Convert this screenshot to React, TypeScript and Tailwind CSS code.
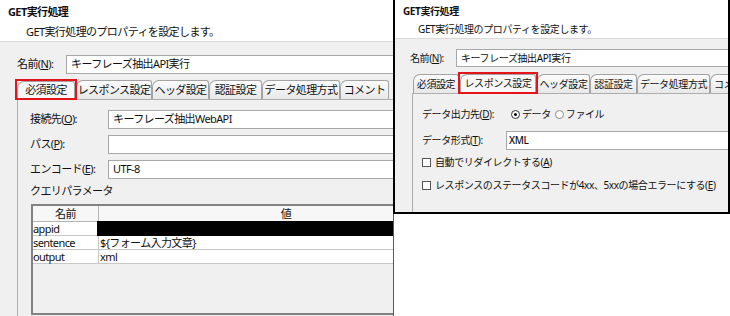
const U = ({ c }: { c: string }) => <span className="underline underline-offset-1">{c}</span>;

const tabBase =
  "shrink-0 flex items-center justify-center border border-b-0 border-[#a3a3a3] rounded-tl-[7px] rounded-tr-[3px] whitespace-nowrap overflow-hidden";
const tabOff = tabBase + " h-[19px] bg-gradient-to-b from-[#fbfbfb] to-[#e8e8e8]";
const tabOn = tabBase + " w-full h-full bg-[#f7f7f7]";
const redBox = "relative z-10 shrink-0 mb-[1px] outline-2 outline-[#e5141b]";

function Radio({ on }: { on?: boolean }) {
  return (
    <span
      className={
        "w-[9px] h-[9px] rounded-full border bg-white flex items-center justify-center shrink-0 " +
        (on ? "border-[#333]" : "border-[#8a8a8a]")
      }
    >
      {on && <span className="w-[3px] h-[3px] rounded-full bg-black" />}
    </span>
  );
}

function Check() {
  return <span className="w-[9px] h-[9px] border border-[#555] bg-white shrink-0" />;
}

export function LeftDialog() {
  return (
    <div className="w-[394px] h-[316px] shrink-0 overflow-hidden border-r border-[#5a5a5a] text-[11px] tracking-[-0.6px]">
      <div className="w-[520px]">
        <div className="bg-white h-[42px] border-b border-[#d9d9d9]">
          <div className="pl-[8px] pt-[4px] leading-[16px] font-bold">GET実行処理</div>
          <div className="pl-[26px] mt-[4px] leading-[16px]">GET実行処理のプロパティを設定します。</div>
        </div>
        <div className="bg-[#f0f0f0] h-[274px] pt-[13px]">
          <div className="flex items-center pl-[17px] h-[19px]">
            <div className="w-[49px]">
              名前(<U c="N" />):
            </div>
            <div className="flex-1 h-[19px] bg-white border border-[#a8a8a8] flex items-center pl-[4px]">
              キーフレーズ抽出API実行
            </div>
          </div>
          <div className="flex items-end h-[20px] mt-[5px] pl-[17px]">
            <div className={redBox + " w-[58px] h-[17px]"}>
              <div className={tabOn}>必須設定</div>
            </div>
            <div className={tabOff + " w-[76px] ml-px"}>レスポンス設定</div>
            <div className={tabOff + " w-[57px]"}>ヘッダ設定</div>
            <div className={tabOff + " w-[53px]"}>認証設定</div>
            <div className={tabOff + " w-[78px]"}>データ処理方式</div>
            <div className={tabOff + " w-[49px]"}>コメント</div>
          </div>
          <div className="ml-[17px] h-[217px] border-t border-l border-[#aeaeae] pl-[12px] pt-[10px]">
            <div className="flex flex-col gap-[6px]">
              <div className="flex items-center h-[19px]">
                <div className="w-[78px]">
                  接続先(<U c="O" />):
                </div>
                <div className="flex-1 h-[19px] bg-white border border-[#a8a8a8] flex items-center pl-[4px]">
                  キーフレーズ抽出WebAPI
                </div>
              </div>
              <div className="flex items-center h-[19px]">
                <div className="w-[78px]">
                  パス(<U c="P" />):
                </div>
                <div className="flex-1 h-[19px] bg-white border border-[#a8a8a8]" />
              </div>
              <div className="flex items-center h-[19px]">
                <div className="w-[78px]">
                  エンコード(<U c="E" />):
                </div>
                <div className="flex-1 h-[19px] bg-white border border-[#a8a8a8] flex items-center pl-[4px]">
                  UTF-8
                </div>
              </div>
            </div>
            <div className="mt-[4px] leading-[16px]">クエリパラメータ</div>
            <div className="mt-[5px] ml-px w-[444px] h-[111px] border-2 border-[#828282] bg-[#f0f0f0]">
              <div className="flex h-[16px] border-b border-[#b5b5b5] bg-[#f7f7f7]">
                <div className="w-[66px] border-r border-[#b5b5b5] text-center leading-[15px]">名前</div>
                <div className="flex-1 text-center leading-[15px]">値</div>
              </div>
              {[
                ["appid", ""],
                ["sentence", "${フォーム入力文章}"],
                ["output", "xml"],
              ].map(([k, v]) => (
                <div key={k} className="flex h-[14px] border-b border-[#c8c8c8] bg-white leading-[13px]">
                  <div className="w-[66px] border-r border-[#c8c8c8]">{k}</div>
                  <div className="relative flex-1 pl-[1px]">
                    {v}
                    {k === "appid" && <div className="absolute -left-[2px] -top-px -bottom-px right-0 bg-black" />}
                  </div>
                </div>
              ))}
            </div>
          </div>
        </div>
      </div>
    </div>
  );
}

export function RightDialog() {
  return (
    <div className="relative z-10 -ml-px w-[337px] h-[214px] shrink-0 overflow-hidden border-l-2 border-r-2 border-b-2 border-black text-[10px] tracking-[-0.4px]">
      <div className="w-[420px]">
        <div className="bg-white h-[39px] border-b border-[#d9d9d9]">
          <div className="pl-[8px] pt-[3px] leading-[16px] font-bold">GET実行処理</div>
          <div className="pl-[23px] mt-[2px] leading-[16px]">GET実行処理のプロパティを設定します。</div>
        </div>
        <div className="bg-[#f0f0f0] h-[173px] pt-[10px]">
          <div className="flex items-center pl-[15px] h-[18px]">
            <div className="w-[46px]">
              名前(<U c="N" />):
            </div>
            <div className="flex-1 h-[18px] bg-white border border-[#a8a8a8] flex items-center pl-[4px]">
              キーフレーズ抽出API実行
            </div>
          </div>
          <div className="flex items-end h-[21px] mt-[5px] pl-[17px]">
            <div className={tabOff + " w-[46px] ml-px"}>必須設定</div>
            <div className={redBox + " w-[76px] h-[18px] ml-px"}>
              <div className={tabOn}>レスポンス設定</div>
            </div>
            <div className={tabOff + " w-[53px] ml-px"}>ヘッダ設定</div>
            <div className={tabOff + " w-[47px]"}>認証設定</div>
            <div className={tabOff + " w-[73px]"}>データ処理方式</div>
            <div className={tabOff + " w-[60px] justify-start pl-[3px]"}>コメント</div>
          </div>
          <div className="ml-[17px] h-[119px] border-t border-l border-[#aeaeae] pl-[9px] pt-[11px]">
            <div className="flex items-center h-[18px]">
              <div className="w-[89px]">
                データ出力先(<U c="D" />):
              </div>
              <Radio on />
              <span className="ml-[2px]">データ</span>
              <span className="ml-[4px]">
                <Radio />
              </span>
              <span className="ml-[2px]">ファイル</span>
            </div>
            <div className="flex items-center h-[19px] mt-[8px]">
              <div className="w-[84px]">
                データ形式(<U c="T" />):
              </div>
              <div className="flex-1 h-[19px] bg-white border border-[#a8a8a8] flex items-center pl-[2px] font-medium">
                XML
              </div>
            </div>
            <div className="flex items-center h-[16px] mt-[4px]">
              <Check />
              <span className="ml-[4px]">
                自動でリダイレクトする(<U c="A" />)
              </span>
            </div>
            <div className="flex items-center h-[16px] mt-[7px]">
              <Check />
              <span className="ml-[4px]">
                レスポンスのステータスコードが4xx、5xxの場合エラーにする(<U c="E" />)
              </span>
            </div>
          </div>
        </div>
      </div>
    </div>
  );
}

export default function App() {
  return (
    <div className="w-[730px] h-[316px] bg-white flex items-start overflow-hidden text-[#111] font-['Noto_Sans','Noto_Sans_CJK_JP',sans-serif]">
      <LeftDialog />
      <RightDialog />
    </div>
  );
}
